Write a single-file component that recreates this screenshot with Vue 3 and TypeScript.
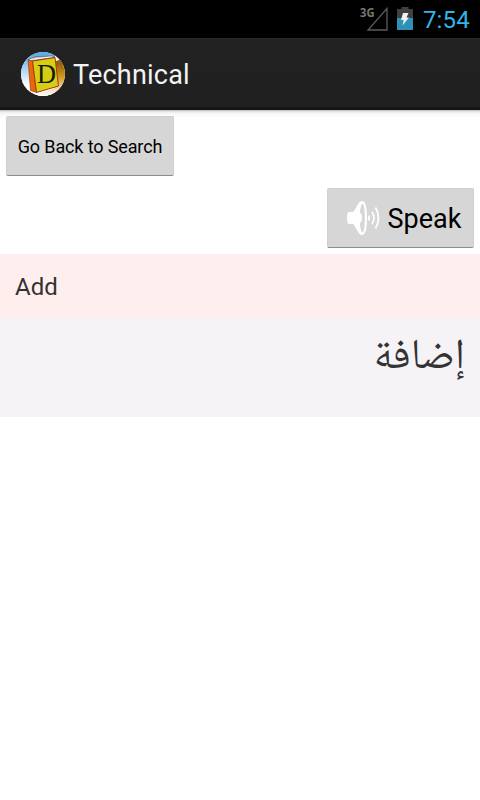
<script setup lang="ts">
import { ref } from 'vue'

interface Entry {
  term: string
  translation: string
}

const clock = ref('7:54')
const title = ref('Technical')
const entry = ref<Entry>({ term: 'Add', translation: 'إضافة' })
</script>

<template>
  <div class="screen">
    <header class="status">
      <svg class="signal" width="30" height="28" viewBox="0 0 30 28">
        <text class="network" x="0" y="12" textLength="14.5" lengthAdjust="spacingAndGlyphs">3G</text>
        <path d="M27 3.500V25H8Z" fill="none" stroke="#5c5c5c" stroke-width="1.3" />
      </svg>
      <svg class="battery" width="16" height="24" viewBox="0 0 16 24">
        <path d="M4.500 0h7v2H16v9H0V2h4.500z" fill="#404040" />
        <path d="M0 11h16v12H0z" fill="#2f90b8" />
        <path d="M6 6h5.500L9.500 10.500H12L5.500 18.500l1.200-5.500H4z" fill="#f2f2f2" />
      </svg>
      <span class="clock">{{ clock }}</span>
    </header>

    <div class="action-bar">
      <svg class="logo" width="44" height="44" viewBox="0 0 44 44">
        <defs>
          <clipPath id="disc"><circle cx="22" cy="22" r="22" /></clipPath>
          <linearGradient id="sky" x1="0" y1="0" x2="0" y2="1">
            <stop offset="0.05" stop-color="#5aaee6" />
            <stop offset="0.75" stop-color="#fff" />
          </linearGradient>
          <linearGradient id="amber" x1="0" y1="0" x2="0" y2="1">
            <stop offset="0.15" stop-color="#94640a" />
            <stop offset="0.5" stop-color="#d49a1c" />
            <stop offset="1" stop-color="#fff" />
          </linearGradient>
        </defs>
        <g clip-path="url(#disc)">
          <rect width="44" height="44" fill="#fff" />
          <rect width="34" height="44" fill="url(#sky)" />
          <path d="M35 9l9-3v38H14l20-8z" fill="url(#amber)" />
          <path d="M7 7.500l4.500 1.500 4 31.500-6-2z" fill="#e46a0a" stroke="#a82a10" stroke-width=".6" />
          <path d="M7 7.500l8-3 18-.5 1 1.500L12 9z" fill="#b9c0c7" stroke="#59636c" stroke-width=".8" />
          <path d="M9 7.500L31 4.800" stroke="#f4f4f4" stroke-width="1" />
          <path d="M11.500 9L34 5.500l3.500 28.500L15.500 40.500z" fill="#d3cf12" stroke="#b32c14" stroke-width="1" />
          <text class="letter" x="16" y="31" textLength="19" lengthAdjust="spacingAndGlyphs">D</text>
        </g>
      </svg>
      <h1 class="title">{{ title }}</h1>
    </div>

    <main class="content">
      <button class="button back" type="button"><span>Go Back to Search</span></button>
      <button class="button speak" type="button">
        <svg class="speaker" width="36" height="36" viewBox="0 0 36 36">
          <path
            fill-rule="evenodd"
            fill="#fff"
            d="M2 12h5C11 8 12 1 16 1c4 0 5 8 5 17s-1 17-5 17c-4 0-5-7-9-11H2q-2-6 0-12zM16.500 3.500c-1.500 1-2.300 5-2.500 9q2 1.500 2 5.500t-2 5.500c.2 4 1 8 2.500 9 1.800-1 2.300-7.500 2.300-14.500S18.300 4.500 16.500 3.500z"
          />
          <path d="M23 15.500v5M26 12q4 6 0 12M29.500 7.500q6 10.500 0 21" fill="none" stroke="#fff" stroke-width="1.800" />
        </svg>
        <span class="speak-label">Speak</span>
      </button>
      <div class="term">{{ entry.term }}</div>
      <div class="translation" dir="rtl" lang="ar"><span>{{ entry.translation }}</span></div>
    </main>
  </div>
</template>

<style>
body {
  background: #fff;
}
</style>

<style scoped>
.screen {
  height: 800px;
  overflow: hidden;
  background: #fff;
  font-family: Roboto, 'Liberation Sans', sans-serif;
}
.status {
  display: flex;
  align-items: flex-start;
  justify-content: flex-end;
  box-sizing: border-box;
  height: 38px;
  padding: 5px 10px 0 0;
  background: #000;
}
.signal {
  overflow: visible;
}
.network {
  font: bold 13px 'Open Sans', sans-serif;
  fill: #777;
}
.battery {
  margin: 2px 10px 0 7px;
}
.clock {
  color: #33b5e5;
  font-size: 24px;
  line-height: 30px;
  letter-spacing: 0.2px;
}
.action-bar {
  display: flex;
  align-items: center;
  box-sizing: border-box;
  height: 72px;
  padding: 0 21px;
  background: linear-gradient(#222, #202020 95%, #151515 97%);
  border-top: 1px solid #2a2a2a;
}
.logo {
  margin-bottom: 1px;
}
.letter {
  font: 27px 'Liberation Serif', serif;
  fill: #17170c;
}
.title {
  margin: 1px 0 0 8px;
  color: #f3f3f3;
  font-size: 27px;
  font-weight: 400;
  letter-spacing: 0.2px;
}
.content {
  display: flex;
  flex-direction: column;
  padding-top: 6px;
  background: linear-gradient(#bdb9bc, #eeebed 2px, #faf7fa 4px, #fff 8px);
}
.button {
  display: flex;
  align-items: center;
  justify-content: center;
  box-sizing: border-box;
  height: 60px;
  margin: 0 6px 12px;
  padding: 0;
  color: #000;
  font-family: inherit;
  background: #d6d6d6;
  border: 1px solid #cfcfcf;
  border-bottom-color: #8c8c8c;
  border-radius: 2px;
}
.back {
  align-self: flex-start;
  width: 168px;
  font-size: 18px;
  letter-spacing: -0.13px;
}
.speak {
  align-self: flex-end;
  width: 147px;
  margin-bottom: 6px;
  font-size: 27px;
}
.speaker {
  margin: 0 6px 0 6px;
}
.speak-label {
  padding-top: 2px;
}
.term {
  box-sizing: border-box;
  height: 64px;
  padding: 2px 15px 0;
  color: #333;
  font-size: 24px;
  line-height: 62px;
  background: #ffeeee;
}
.translation {
  box-sizing: border-box;
  height: 99px;
  padding: 0 15px;
  color: #333;
  font-family: 'Noto Naskh Arabic', 'DejaVu Sans', sans-serif;
  font-size: 42.5px;
  line-height: 83px;
  background: #f6f3f7;
}
</style>
